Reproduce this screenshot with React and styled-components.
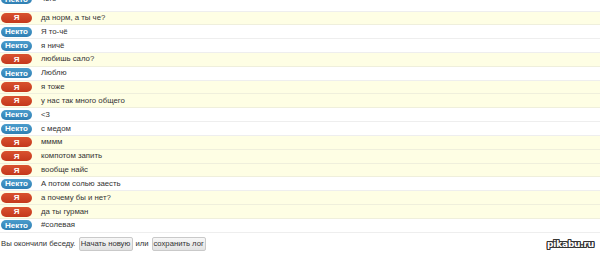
import React from "react";
import styled, { createGlobalStyle } from "styled-components";

const Global = createGlobalStyle`
  html, body { margin: 0; padding: 0; background: #fff; }
  body { width: 600px; height: 256px; overflow: hidden; font-family: "Liberation Sans", Arial, sans-serif; }
`;

const Page = styled.div`
  width: 600px;
  height: 256px;
  position: relative;
  overflow: hidden;
  display: flex;
  flex-direction: column;
`;

const Log = styled.div`
  display: flex;
  flex-direction: column;
  margin-top: -8px;
`;

const Row = styled.div`
  height: ${p => (p.$partial ? "19.5px" : "13.84px")};
  box-sizing: border-box;
  display: flex;
  align-items: ${p => (p.$partial ? "flex-start" : "center")};
  padding-top: ${p => (p.$partial ? "2px" : "0")};
  border-bottom: 1px solid ${p => (p.$me ? "#efefdc" : "#eeeeee")};
  background: ${p => (p.$me ? "#fefee4" : "#ffffff")};
  font-size: 7.8px;
  color: #333;
`;

const Badge = styled.span`
  width: 31px;
  height: 10px;
  margin-left: 1px;
  border-radius: 5px;
  display: flex;
  align-items: center;
  justify-content: center;
  font-size: 8px;
  font-weight: bold;
  color: #fff;
  background: ${p => (p.$me ? "linear-gradient(#d9522f, #c4381c)" : "linear-gradient(#4b9ccc, #2f7fb3)")};
  flex-shrink: 0;
`;

const Msg = styled.span`
  margin-left: 9px;
  white-space: nowrap;
  line-height: 10px;
`;

const Footer = styled.div`
  display: flex;
  align-items: center;
  gap: 3px;
  margin-top: 4px;
  padding-left: 1px;
  font-size: 7.7px;
  color: #333;
`;

const Btn = styled.button`
  height: 14px;
  width: 54px;
  padding: 0;
  border: 1px solid #c9c9c9;
  border-radius: 2px;
  background: linear-gradient(#f7f7f7, #e2e2e2);
  font-family: "Liberation Sans", Arial, sans-serif;
  font-size: 7.7px;
  color: #333;
  white-space: nowrap;
`;

const Logo = styled.div`
  position: absolute;
  right: 6px;
  bottom: 7px;
  font-family: "DejaVu Sans", sans-serif;
  font-weight: bold;
  font-size: 9px;
  color: #fff;
  letter-spacing: -0.2px;
  text-shadow: -1px 0 #333, 1px 0 #333, 0 -1px #333, 0 1px #333, -1px -1px #333, 1px 1px #333, -1px 1px #333, 1px -1px #333;
`;

const messages = [
  [false, "чего"],
  [true, "да норм, а ты че?"],
  [false, "Я то-чё"],
  [false, "я ничё"],
  [true, "любишь сало?"],
  [false, "Люблю"],
  [true, "я тоже"],
  [true, "у нас так много общего"],
  [false, "<3"],
  [false, "с медом"],
  [true, "мммм"],
  [true, "компотом запить"],
  [true, "вообще найс"],
  [false, "А потом солью заесть"],
  [true, "а почему бы и нет?"],
  [true, "да ты гурман"],
  [false, "#солевая"],
];

export default function App() {
  return (
    <Page>
      <Global />
      <Log>
        {messages.map(([me, text], i) => (
          <Row key={i} $me={me} $partial={i === 0}>
            <Badge $me={me}>{me ? "Я" : "Некто"}</Badge>
            <Msg>{text}</Msg>
          </Row>
        ))}
      </Log>
      <Footer>
        <span>Вы окончили беседу.</span>
        <Btn>Начать новую</Btn>
        <span>или</span>
        <Btn>сохранить лог</Btn>
      </Footer>
      <Logo>pikabu.ru</Logo>
    </Page>
  );
}
